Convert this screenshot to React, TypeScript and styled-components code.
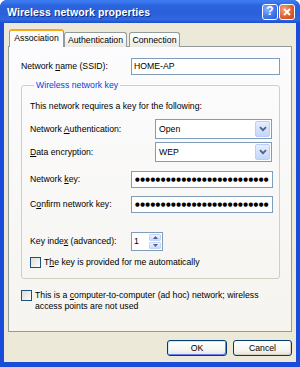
import React from 'react'
import styled, { createGlobalStyle } from 'styled-components'

const GlobalStyle = createGlobalStyle`
    html, body {
        margin: 0;
        padding: 0;
        background: #fff;
    }
    body {
        font-family: 'Liberation Sans', Arial, sans-serif;
        font-size: 8.7px;
        line-height: 11px;
        color: #000;
    }
    u {
        text-decoration-thickness: 1px;
        text-underline-offset: 1px;
    }
`

const Window = styled.div`
    width: 300px;
    height: 367px;
    display: flex;
    flex-direction: column;
    background: #1a4cdb;
    border-radius: 7px 7px 0 0;
    overflow: hidden;
`

const TitleBar = styled.div`
    height: 23px;
    flex: none;
    display: flex;
    align-items: center;
    padding: 0 5px 0 7px;
    background: linear-gradient(
        to bottom,
        #3d7bf0 0%,
        #3a78ee 8%,
        #2a63dc 25%,
        #2a61da 60%,
        #2f68e0 85%,
        #1d4fd0 100%
    );
`

const Title = styled.span`
    flex: 1;
    color: #fff;
    font-weight: bold;
    font-size: 10.5px;
    letter-spacing: 0.1px;
    text-shadow: 1px 1px 0 #0f2f8a;
    padding-top: 2px;
`

const TitleButton = styled.div<{ $close?: boolean }>`
    width: 16px;
    height: 16px;
    margin-left: 1px;
    box-sizing: border-box;
    border: 1px solid #fff;
    border-radius: 3px;
    display: flex;
    align-items: center;
    justify-content: center;
    background: ${(p) =>
        p.$close
            ? 'radial-gradient(circle at 30% 30%, #f0a27e 0%, #e0622f 55%, #c2401a 100%)'
            : 'radial-gradient(circle at 30% 30%, #8db2fb 0%, #3f78ee 55%, #255ad8 100%)'};
    color: #fff;
    font-weight: bold;
    font-size: 12px;
`

const Body = styled.div`
    flex: 1;
    margin: 0 4px 5px;
    background: #ece9d8;
    display: flex;
    flex-direction: column;
`

const TabStrip = styled.div`
    display: flex;
    align-items: flex-end;
    height: 18px;
    margin: 6px 0 -1px 5px;
    position: relative;
    z-index: 1;
`

const Tab = styled.div<{ $active?: boolean; $w: number; $ml?: number }>`
    width: ${(p) => p.$w}px;
    margin-left: ${(p) => p.$ml ?? 0}px;
    height: ${(p) => (p.$active ? 18 : 15)}px;
    box-sizing: border-box;
    display: flex;
    align-items: center;
    justify-content: center;
    border: 1px solid #919b9c;
    border-bottom: none;
    border-top: ${(p) => (p.$active ? '2px solid #f5a623' : '1px solid #919b9c')};
    border-radius: 3px 3px 0 0;
    background: ${(p) =>
        p.$active ? '#fcfcfe' : 'linear-gradient(#ffffff, #f3f3ef 60%, #e9e8e1)'};
    padding-bottom: ${(p) => (p.$active ? 1 : 0)}px;
`

const Panel = styled.div`
    height: 286px;
    box-sizing: border-box;
    margin: 0 4px 0 4px;
    border: 1px solid #919b9c;
    background: linear-gradient(#fcfcfe, #f5f4ef);
    padding: 11px 11px 0 12px;
    display: flex;
    flex-direction: column;
`

const Row = styled.div<{ $mt?: number }>`
    display: flex;
    align-items: center;
    margin-top: ${(p) => p.$mt ?? 0}px;
`

const Label = styled.span<{ $w: number }>`
    width: ${(p) => p.$w}px;
    flex: none;
    white-space: nowrap;
`

const TextBox = styled.div<{ $h?: number }>`
    flex: 1;
    min-width: 0;
    overflow: hidden;
    height: ${(p) => p.$h ?? 17}px;
    box-sizing: border-box;
    border: 1px solid #7f9db9;
    background: #fff;
    display: flex;
    align-items: center;
    padding-left: 2px;
    white-space: nowrap;
`

const Dots = styled.span`
    font-family: 'DejaVu Sans', sans-serif;
    font-size: 5.4px;
    letter-spacing: 0.45px;
    padding-left: 1px;
`

const Group = styled.fieldset`
    margin: 5px 0 0;
    padding: 10px 6px 10px 8px;
    border: 1px solid #d0d0bf;
    border-radius: 3px;
    min-width: 0;
`

const Legend = styled.legend`
    color: #0046d5;
    padding: 0 2px;
    margin-left: 4px;
`

const Select = styled.div`
    width: 117px;
    height: 20px;
    box-sizing: border-box;
    border: 1px solid #7f9db9;
    background: #fff;
    display: flex;
    align-items: center;
    justify-content: space-between;
    padding: 0 1px 0 3px;
`

const SelectArrow = styled.span`
    width: 15px;
    height: 16px;
    box-sizing: border-box;
    border: 1px solid #b9cefc;
    border-radius: 2px;
    background: linear-gradient(#e6eefe, #c4d6fb);
    display: flex;
    align-items: center;
    justify-content: center;
`

const Spinner = styled.div`
    width: 32px;
    height: 19px;
    box-sizing: border-box;
    border: 1px solid #7f9db9;
    background: #fff;
    display: flex;
    align-items: center;
    padding: 1px 1px 1px 2px;
`

const SpinValue = styled.span`
    flex: 1;
`

const SpinButtons = styled.div`
    width: 12px;
    height: 100%;
    display: flex;
    flex-direction: column;
    gap: 1px;
`

const SpinButton = styled.div`
    flex: 1;
    border: 1px solid #c4d4f5;
    border-radius: 1px;
    background: linear-gradient(#eef3fe, #c9d9fb);
    display: flex;
    align-items: center;
    justify-content: center;
`

const CheckRow = styled.label<{ $mt?: number }>`
    display: flex;
    align-items: flex-start;
    gap: 2px;
    margin-top: ${(p) => p.$mt ?? 0}px;
`

const CheckBox = styled.span`
    width: 11px;
    height: 11px;
    flex: none;
    box-sizing: border-box;
    border: 1px solid #1c5180;
    background: linear-gradient(135deg, #dcdcd7, #fdfdfc);
    margin-right: 1px;
`

const ButtonRow = styled.div`
    display: flex;
    justify-content: flex-end;
    gap: 6px;
    margin: 8px 4px 0 0;
`

const Button = styled.button<{ $w: number; $default?: boolean }>`
    width: ${(p) => p.$w}px;
    height: 16px;
    box-sizing: border-box;
    border: 1px solid #003c74;
    border-radius: 3px;
    background: linear-gradient(#ffffff, #f4f4f0 70%, #e3e2da);
    box-shadow: ${(p) =>
        p.$default
            ? 'inset 1px 1px 0 #cee7ff, inset -1px -1px 0 #6982ee'
            : 'inset -1px -1px 0 #d6d0c5'};
    font: inherit;
    color: #000;
    padding: 0;
`

const Chevron = () => (
    <svg width="8" height="6" viewBox="0 0 8 6">
        <path d="M1 1.2 L4 4.2 L7 1.2" fill="none" stroke="#4d6185" strokeWidth="1.8" />
    </svg>
)

const SpinArrow = ({ up }: { up?: boolean }) => (
    <svg width="5" height="3" viewBox="0 0 5 3">
        <path d={up ? 'M0 3 L2.5 0 L5 3 Z' : 'M0 0 L2.5 3 L5 0 Z'} fill="#4d6185" />
    </svg>
)

const KEY = '●'.repeat(26)

export default function App() {
    return (
        <>
            <GlobalStyle />
            <Window>
                <TitleBar>
                    <Title>Wireless network properties</Title>
                    <TitleButton>?</TitleButton>
                    <TitleButton $close>
                        <svg width="8" height="8" viewBox="0 0 8 8">
                            <path d="M1 1 L7 7 M7 1 L1 7" stroke="#fff" strokeWidth="1.8" />
                        </svg>
                    </TitleButton>
                </TitleBar>
                <Body>
                    <TabStrip>
                        <Tab $active $w={55}>Association</Tab>
                        <Tab $w={63}>Authentication</Tab>
                        <Tab $w={51} $ml={2}>Connection</Tab>
                    </TabStrip>
                    <Panel>
                        <Row>
                            <Label $w={110}>
                                Network <u>n</u>ame (SSID):
                            </Label>
                            <TextBox>HOME-AP</TextBox>
                        </Row>

                        <Group>
                            <Legend>Wireless network key</Legend>
                            <Row>This network requires a key for the following:</Row>
                            <Row $mt={7}>
                                <Label $w={125}>
                                    Network <u>A</u>uthentication:
                                </Label>
                                <Select>
                                    Open
                                    <SelectArrow>
                                        <Chevron />
                                    </SelectArrow>
                                </Select>
                            </Row>
                            <Row $mt={3}>
                                <Label $w={125}>
                                    <u>D</u>ata encryption:
                                </Label>
                                <Select>
                                    WEP
                                    <SelectArrow>
                                        <Chevron />
                                    </SelectArrow>
                                </Select>
                            </Row>
                            <Row $mt={9}>
                                <Label $w={101}>
                                    Network <u>k</u>ey:
                                </Label>
                                <TextBox>
                                    <Dots>{KEY}</Dots>
                                </TextBox>
                            </Row>
                            <Row $mt={8}>
                                <Label $w={101}>
                                    C<u>o</u>nfirm network key:
                                </Label>
                                <TextBox>
                                    <Dots>{KEY}</Dots>
                                </TextBox>
                            </Row>
                            <Row $mt={19}>
                                <Label $w={101}>
                                    Key inde<u>x</u> (advanced):
                                </Label>
                                <Spinner>
                                    <SpinValue>1</SpinValue>
                                    <SpinButtons>
                                        <SpinButton>
                                            <SpinArrow up />
                                        </SpinButton>
                                        <SpinButton>
                                            <SpinArrow />
                                        </SpinButton>
                                    </SpinButtons>
                                </Spinner>
                            </Row>
                            <CheckRow $mt={6}>
                                <CheckBox />
                                <span>
                                    T<u>h</u>e key is provided for me automatically
                                </span>
                            </CheckRow>
                        </Group>

                        <CheckRow $mt={11}>
                            <CheckBox />
                            <span>
                                This is a <u>c</u>omputer-to-computer (ad hoc) network; wireless
                                <br />
                                access points are not used
                            </span>
                        </CheckRow>
                    </Panel>
                    <ButtonRow>
                        <Button $w={60} $default>
                            OK
                        </Button>
                        <Button $w={59}>Cancel</Button>
                    </ButtonRow>
                </Body>
            </Window>
        </>
    )
}
